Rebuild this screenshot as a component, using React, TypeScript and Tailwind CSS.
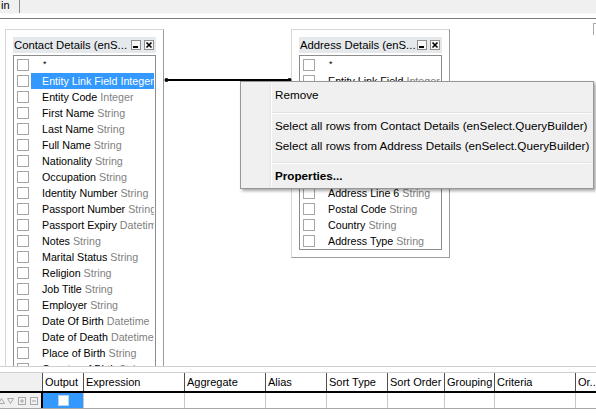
import React from "react";

type Field = [string, string];

const contactFields: Field[] = [
  ["Entity Link Field", "Integer"],
  ["Entity Code", "Integer"],
  ["First Name", "String"],
  ["Last Name", "String"],
  ["Full Name", "String"],
  ["Nationality", "String"],
  ["Occupation", "String"],
  ["Identity Number", "String"],
  ["Passport Number", "String"],
  ["Passport Expiry", "Datetime"],
  ["Notes", "String"],
  ["Marital Status", "String"],
  ["Religion", "String"],
  ["Job Title", "String"],
  ["Employer", "String"],
  ["Date Of Birth", "Datetime"],
  ["Date of Death", "Datetime"],
  ["Place of Birth", "String"],
  ["Country of Birth", "String"],
];

const addressFields: Field[] = [
  ["Entity Link Field", "Integer"],
  ["Entity Code", "Integer"],
  ["Address Line 1", "String"],
  ["Address Line 2", "String"],
  ["Address Line 3", "String"],
  ["Address Line 4", "String"],
  ["Address Line 5", "String"],
  ["Address Line 6", "String"],
  ["Postal Code", "String"],
  ["Country", "String"],
  ["Address Type", "String"],
];

const columns = [
  { label: "Output", w: "w-[41px]" },
  { label: "Expression", w: "w-[101px]" },
  { label: "Aggregate", w: "w-[81px]" },
  { label: "Alias", w: "w-[61px]" },
  { label: "Sort Type", w: "w-[61px]" },
  { label: "Sort Order", w: "w-[57px]" },
  { label: "Grouping", w: "w-[50px]" },
  { label: "Criteria", w: "w-[81px]" },
  { label: "Or..", w: "w-[40px]" },
];

export default function App() {
  return (
    <div className="w-[596px] h-[416px] overflow-hidden bg-white font-['Liberation_Sans',Arial,sans-serif] text-black select-none">
      {/* tab strip */}
      <div className="h-[13px] bg-[#f0f0f0] flex">
        <div className="w-[20px] border-r border-[#8a8a8a] text-[11px] leading-[11px] pl-[1px]">in</div>
      </div>
      <div className="h-[5px] border-t border-[#f8f8f8] bg-white" />
      <div className="h-[1px] bg-[#7a7a7a]" />

      {/* design canvas */}
      <div className="relative h-[347px] overflow-hidden bg-white">
        <div className="absolute right-0 top-[4px] w-[3px] h-[12px] border-l border-t border-[#a8a8a8]" />

        <TableBox title="Contact Details (enS..." fields={contactFields} selected={0} pos="left-[5px] top-[10px]" />
        <TableBox title="Address Details (enS..." fields={addressFields} pos="left-[291px] top-[10px]" />

        <svg className="absolute left-[163px] top-[58px]" width="130" height="6" viewBox="0 0 130 6">
          <line x1="3" y1="3" x2="127" y2="3" stroke="#000" strokeWidth="2" />
          <circle cx="3.5" cy="3" r="2" fill="#000" />
          <circle cx="126.5" cy="3" r="2" fill="#000" />
        </svg>

        <ContextMenu />
      </div>

      {/* query grid */}
      <div className="h-[1px] bg-[#cfcfcf]" />
      <div className="h-[5px] bg-white" />
      <div className="flex h-[19px] border-t border-[#d0d0d0] text-[11px] leading-[18px]">
        <div className="w-[42px] bg-[#f0f0f0] shrink-0" />
        {columns.map((c) => (
          <div key={c.label} className={`${c.w} shrink-0 border-l border-[#505050] pl-[2px] whitespace-nowrap overflow-hidden`}>
            {c.label}
          </div>
        ))}
      </div>
      <div className="h-[2px] bg-black" />
      <div className="flex h-[16px] border-b border-[#a8a8a8]">
        <div className="w-[43px] shrink-0 bg-[#f0f0f0] border-r-2 border-black flex items-center">
          <RowIcons />
        </div>
        <div className="w-[40px] shrink-0 bg-[#3399ff] flex items-center justify-center">
          <span className="w-[11px] h-[11px] bg-white border border-[#b9d4ef]" />
        </div>
        {columns.slice(1).map((c) => (
          <div key={c.label} className={`${c.w} shrink-0 border-l border-[#c8c8c8] bg-white`} />
        ))}
      </div>
    </div>
  );
}

function TableBox({
  title,
  fields,
  selected,
  pos,
}: {
  title: string;
  fields: Field[];
  selected?: number;
  pos: string;
}) {
  return (
    <div
      className={`absolute ${pos} w-[159px] border border-t-[#d6d6d6] border-l-[#d6d6d6] border-r-[#9c9c9c] border-b-[#9c9c9c] bg-white p-[7px]`}
    >
      <div className="h-[16px] bg-[#e6e9ec] flex items-center pl-[1px] pr-[2px]">
        <span className="flex-1 min-w-0 overflow-hidden whitespace-nowrap text-[11.3px] leading-[16px]">{title}</span>
        <TitleButton kind="min" />
        <span className="w-[3px]" />
        <TitleButton kind="close" />
      </div>
      <div className="mt-[2px] border border-[#8c8c8c] bg-white pt-[1px]">
        <div className="h-[16px] flex items-center">
          <span className="ml-[3px] w-[12px] h-[12px] border border-[#a6a6a6] bg-white shrink-0" />
          <span className="ml-[2px] pl-[12px] text-[9px] leading-[9px] self-start mt-[3px]">*</span>
        </div>
        {fields.map(([name, type], i) => {
          const sel = i === selected;
          return (
            <div key={name} className="h-[16px] flex items-center">
              <span className="ml-[3px] w-[12px] h-[12px] border border-[#a6a6a6] bg-white shrink-0" />
              <span
                className={`ml-[2px] mr-[1px] h-[16px] flex-1 min-w-0 pl-[11px] whitespace-nowrap overflow-hidden leading-[16px] text-[10.7px] ${
                  sel ? "bg-[#3399ff] text-white" : "text-black"
                }`}
              >
                {name} <span className={sel ? "text-white" : "text-[#7f7f7f]"}>{type}</span>
              </span>
            </div>
          );
        })}
      </div>
    </div>
  );
}

function TitleButton({ kind }: { kind: "min" | "close" }) {
  return (
    <svg width="10" height="10" viewBox="0 0 10 10" className="shrink-0">
      <rect x="0.5" y="0.5" width="9" height="9" fill="#f7f7f7" stroke="#8e8e8e" />
      {kind === "min" ? (
        <rect x="2" y="6" width="5" height="2" fill="#000" />
      ) : (
        <path d="M2.5 2.5 L7.5 7.5 M7.5 2.5 L2.5 7.5" stroke="#000" strokeWidth="1.6" />
      )}
    </svg>
  );
}

function ContextMenu() {
  return (
    <div className="absolute left-[240px] top-[62px] w-[354px] border border-[#979797] bg-[#f0f0f0] p-[2px] shadow-[2px_2px_3px_rgba(0,0,0,0.35)] text-[11.7px] text-black">
      <div className="relative">
        <div className="absolute left-[27px] top-0 bottom-0 w-[1px] bg-[#e2e3e3]" />
        <div className="absolute left-[28px] top-0 bottom-0 w-[1px] bg-white" />
        <MenuItem h="h-[22px]">Remove</MenuItem>
        <Separator />
        <MenuItem h="h-[20px]">Select all rows from Contact Details (enSelect.QueryBuilder)</MenuItem>
        <MenuItem h="h-[20px]">Select all rows from Address Details (enSelect.QueryBuilder)</MenuItem>
        <Separator />
        <MenuItem h="h-[20px]" bold>
          Properties...
        </MenuItem>
      </div>
    </div>
  );
}

function MenuItem({ h, bold, children }: { h: string; bold?: boolean; children: React.ReactNode }) {
  return (
    <div className={`${h} flex items-center pl-[32px] whitespace-nowrap ${bold ? "font-bold" : ""}`}>{children}</div>
  );
}

function Separator() {
  return (
    <div className="h-[10px] pt-[6px] pl-[29px]">
      <div className="h-[1px] bg-[#e0e0e0]" />
      <div className="h-[1px] bg-white" />
    </div>
  );
}

function RowIcons() {
  return (
    <svg width="40" height="10" viewBox="0 0 40 10" className="ml-[-2px]">
      <path d="M0.5 7.5 L3.5 2.5 L6.5 7.5 Z" fill="none" stroke="#a8a8a8" />
      <path d="M9.5 2.5 L15.5 2.5 L12.5 7.5 Z" fill="none" stroke="#a8a8a8" />
      <rect x="20.5" y="1.5" width="7" height="7" fill="none" stroke="#a8a8a8" />
      <path d="M22 5 H26 M24 3 V7" stroke="#a8a8a8" />
      <rect x="32.5" y="1.5" width="7" height="7" fill="none" stroke="#a8a8a8" />
      <path d="M34 5 H38" stroke="#a8a8a8" />
    </svg>
  );
}
